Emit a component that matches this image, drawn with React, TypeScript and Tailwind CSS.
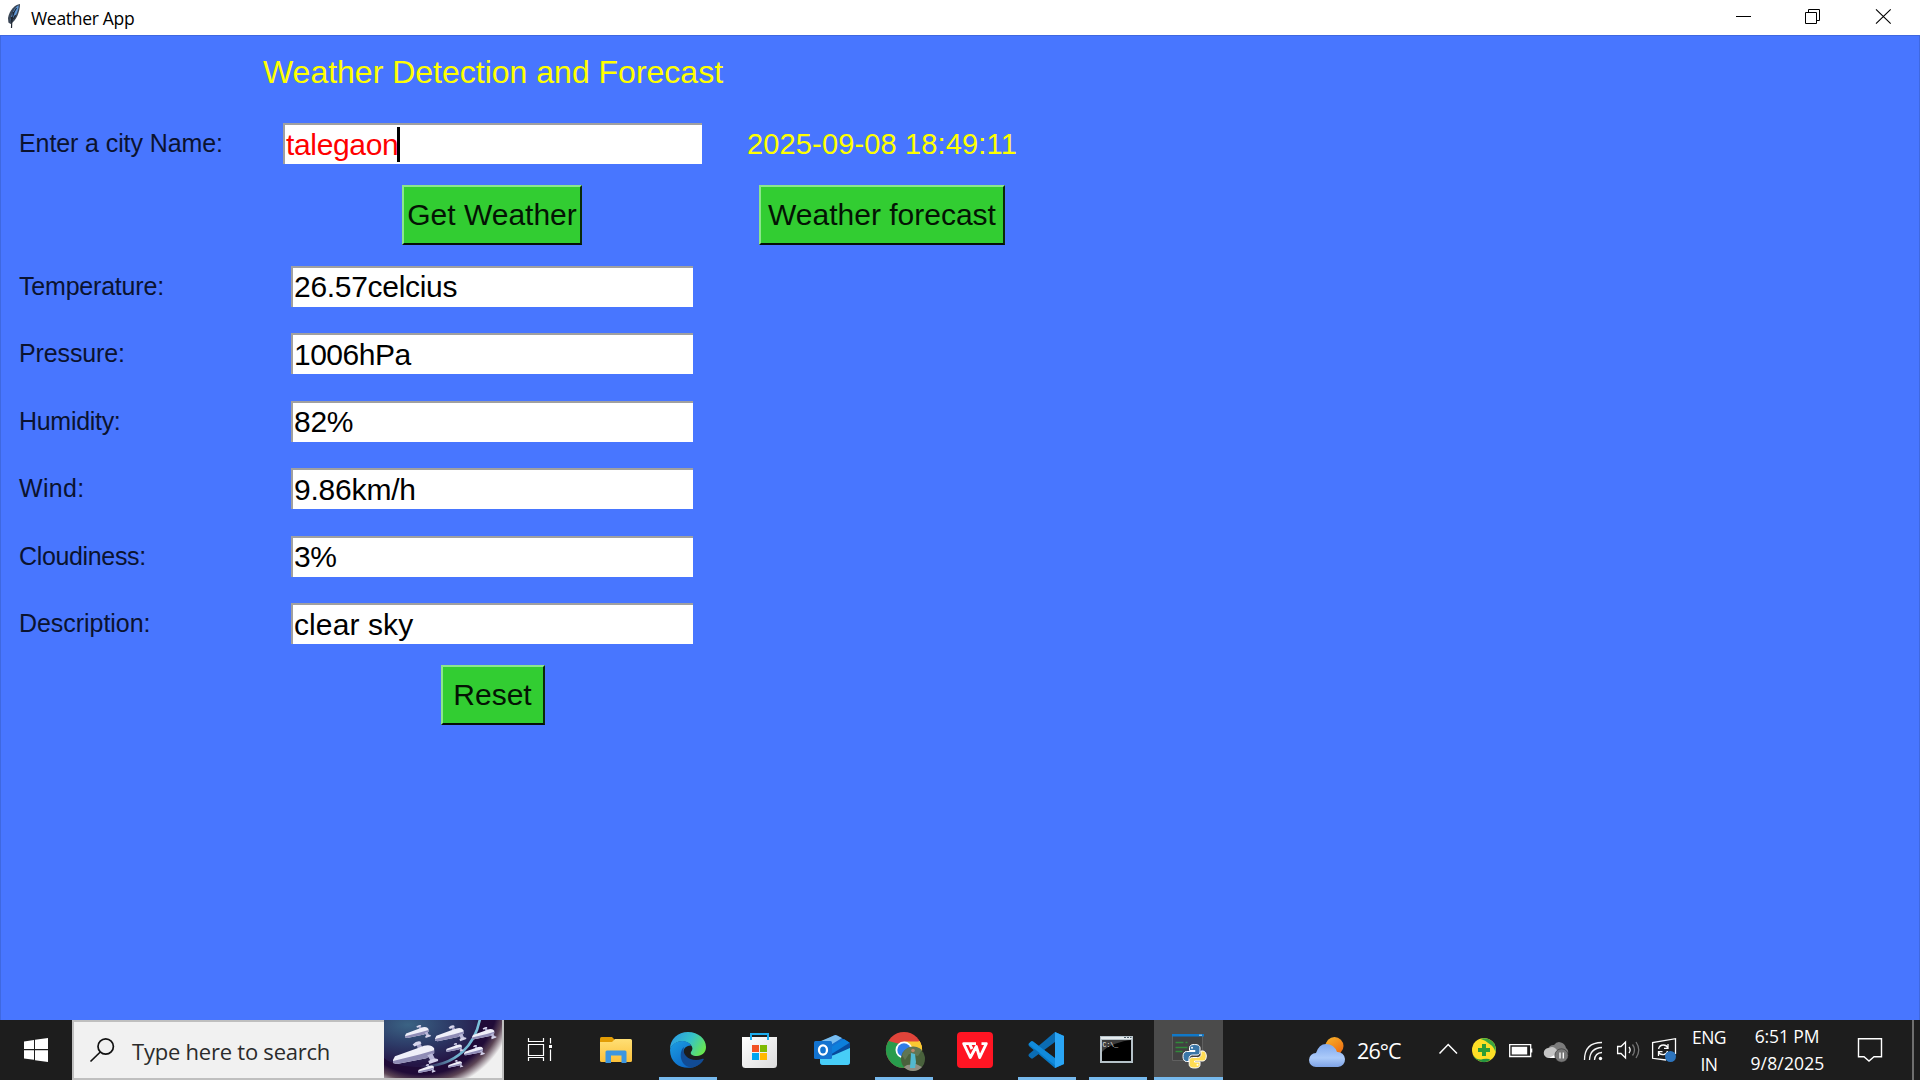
import React from "react";

const readings = [
  { label: "Temperature:", value: "26.57celcius", fit: "tracking-[-0.3px]", labelFit: "tracking-[-0.2px]" },
  { label: "Pressure:", value: "1006hPa", fit: "tracking-[-0.5px]", labelFit: "tracking-[-0.12px]" },
  { label: "Humidity:", value: "82%", fit: "tracking-[-0.3px]", labelFit: "tracking-[-0.3px]" },
  { label: "Wind:", value: "9.86km/h", fit: "tracking-[-0.2px]", labelFit: "tracking-[0.35px]" },
  { label: "Cloudiness:", value: "3%", fit: "tracking-[-0.35px]", labelFit: "tracking-[-0.35px]" },
  { label: "Description:", value: "clear sky", fit: "tracking-[0.1px]", labelFit: "tracking-[-0.05px]" },
];

function Feather() {
  return (
    <svg className="h-[26px] w-[16px]" viewBox="0 0 16 26">
      <path d="M14 1C9 1.500 3.500 7 2 15L2.400 19.500 4.500 21C10 18 14 9 14 1Z" fill="#3a4656" />
      <path d="M12.800 2.300C9 4 5.500 10 4.500 17.500 9 15 12.300 9 12.800 2.300Z" fill="#5f97d6" />
      <path d="M10.500 5C7.500 9 5.500 15 5.500 25M7 9v4M5.500 14v4M9.500 12l-2 4" stroke="#1c2430" strokeWidth="1.200" fill="none" />
    </svg>
  );
}

function TitleBar() {
  return (
    <header className="flex h-[35px] w-full items-center bg-white">
      <div className="flex h-full w-[31px] items-center pl-[6px] pb-[3px]">
        <Feather />
      </div>
      <span className="pt-[3px] text-[17.5px] leading-none tracking-[-0.3px] text-black">Weather App</span>
      <div className="ml-auto flex h-full">
        <svg className="h-[35px] w-[70px]" viewBox="0 0 70 35">
          <path d="M27 16.500H42" stroke="#000" />
        </svg>
        <svg className="h-[35px] w-[70px]" viewBox="0 0 70 35" fill="none" stroke="#000">
          <path d="M26.500 12.500h11v11h-11zM29.500 12V9.500H40.500V20.500H38" />
        </svg>
        <svg className="h-[35px] w-[71px]" viewBox="0 0 71 35">
          <path d="M27 9.300L41.700 23.700M41.700 9.300L27 23.700" stroke="#000" strokeWidth="1.100" />
        </svg>
      </div>
    </header>
  );
}

function TkButton({ size, children }: { size: string; children: React.ReactNode }) {
  return (
    <button
      className={
        size +
        " flex h-[60px] items-center justify-center whitespace-nowrap border-2 border-t-[#8ce68c] border-l-[#8ce68c] border-r-[#0a2a0a] border-b-[#061006] bg-[#32cd32] text-[30px] leading-none text-[#041404]"
      }
    >
      {children}
    </button>
  );
}

function WeatherForm() {
  return (
    <main className="h-[985px] w-full border-x border-t border-[#3f68e0] bg-[#4876ff] font-['Liberation_Sans',Arial,sans-serif]">
      <div className="grid w-[1033px] grid-cols-[253px_476px_304px]">
        <div />
        <h1 className="flex h-[72px] items-center justify-center whitespace-nowrap pl-[2px] text-[32px] leading-none text-[#ffff00]">
          Weather Detection and Forecast
        </h1>
        <div />

        <label className="flex h-[72px] items-center whitespace-nowrap pb-[1px] pl-[18px] text-[25px] leading-none tracking-[-0.1px] text-[#0b1330]">
          Enter a city Name:
        </label>
        <div className="flex h-[72px] items-center justify-center pb-[1px] pl-[1px]">
          <div className="flex h-[41px] w-[419px] items-center border-t-2 border-l-2 border-t-[#a0a0a0] border-l-[#a0a0a0] bg-white pl-[1px] pt-[1px]">
            <span className="text-[30px] leading-none tracking-[-0.35px] text-[#ff0000]">talegaon</span>
            <span className="-ml-[1px] mb-[1px] h-[35px] w-[3px] bg-black" />
          </div>
        </div>
        <div className="flex h-[72px] items-center justify-center text-[29px] leading-none tracking-[0.15px] text-[#ffff00]">
          2025-09-08 18:49:11
        </div>

        <div />
        <div className="flex h-[70px] items-center justify-center">
          <TkButton size="w-[180px]">Get Weather</TkButton>
        </div>
        <div className="flex h-[70px] items-center justify-center">
          <TkButton size="w-[246px]">Weather forecast</TkButton>
        </div>
      </div>

      <div className="pt-[2.5px]">
        {readings.map((r) => (
          <div key={r.label} className="grid h-[67.5px] w-[732px] grid-cols-[290px_402px] items-center">
            <label className={r.labelFit + " pl-[18px] text-[25px] leading-none text-[#0b1330]"}>{r.label}</label>
            <div
              className={
                r.fit +
                " flex h-[41px] items-center border-t-2 border-l-2 border-t-[#a0a0a0] border-l-[#a0a0a0] bg-white pl-[1px] text-[30px] leading-none text-black"
              }
            >
              {r.value}
            </div>
          </div>
        ))}
      </div>

      <div className="flex h-[75px] w-[730px] items-center justify-center pl-[253px]">
        <TkButton size="w-[104px]">Reset</TkButton>
      </div>
    </main>
  );
}

function Plane({ x, y, s }: { x: number; y: number; s: number }) {
  return (
    <g transform={`translate(${x} ${y}) scale(${s})`}>
      <path d="M24 3l4-1 4 8h-6z" fill="#a3a1c8" />
      <path d="M20 3q4-4 8-3l1 2-7 3z" fill="#d9d8ee" />
      <path d="M0 19L2 15 27 6Q38 1 42 7L42 12 34 17 4 23 0 22Z" fill="#efeff9" />
      <path d="M0 20L28 13 42 9V12L34 17 4 23 0 22Z" fill="#8f8cb6" />
      <path d="M35 14l5-2 4 8-5 1z" fill="#b9b7d8" />
      <path d="M36 20q6-4 10-2v2l-9 3z" fill="#d5d3ea" />
    </g>
  );
}

function SearchArt() {
  return (
    <svg className="h-[58px] w-[118px]" viewBox="0 0 118 58">
      <defs>
        <radialGradient id="sky" cx="0.25" cy="0.1" r="0.85">
          <stop offset="0" stopColor="#3b6384" />
          <stop offset="0.5" stopColor="#2d3c68" />
          <stop offset="1" stopColor="#251546" />
        </radialGradient>
        <radialGradient id="halo" gradientUnits="userSpaceOnUse" cx="38" cy="-22" r="93">
          <stop offset="0.82" stopColor="#200b38" />
          <stop offset="0.9" stopColor="#5c4555" />
          <stop offset="1" stopColor="#f0f0f0" />
        </radialGradient>
        <linearGradient id="rim" x1="1" y1="0" x2="0" y2="1">
          <stop offset="0" stopColor="#7cc3dc" />
          <stop offset="0.6" stopColor="#6fb0cc" />
          <stop offset="1" stopColor="#6fb0cc" stopOpacity="0" />
        </linearGradient>
      </defs>
      <rect width="118" height="58" fill="url(#halo)" />
      <path d="M0 0H96C90 26 74 46 46 47 26 48 8 45 0 38Z" fill="url(#sky)" />
      <path d="M96 -1C91 24 74 46 36 47" stroke="url(#rim)" strokeWidth="2.600" fill="none" />
      <Plane x={21} y={5} s={0.56} />
      <Plane x={51} y={5.5} s={0.68} />
      <Plane x={88} y={7} s={0.53} />
      <Plane x={9} y={21.5} s={0.98} />
      <Plane x={62} y={23} s={0.38} />
      <Plane x={80} y={25} s={0.45} />
      <Plane x={34} y={44} s={0.38} />
      <Plane x={64} y={40} s={0.33} />
    </svg>
  );
}

function TaskCell({ size, open, active, children }: { size: string; open?: boolean; active?: boolean; children: React.ReactNode }) {
  return (
    <div className={size + " relative h-[60px] shrink-0 " + (active ? "bg-[#4b4b4b]" : "")}>
      <svg className="h-[60px] w-[72px]" viewBox="0 0 72 60">
        {children}
      </svg>
      {open && (
        <div className={"absolute bottom-0 h-[3px] bg-[#76b9ed] " + (active ? "left-0 right-0" : "left-[7px] w-[58px]")} />
      )}
    </div>
  );
}

function TrayIcon({ size = "w-[36px]", box = "0 0 36 60", children }: { size?: string; box?: string; children: React.ReactNode }) {
  return (
    <svg className={size + " h-[60px] shrink-0"} viewBox={box} fill="none">
      {children}
    </svg>
  );
}

function Taskbar() {
  return (
    <footer className="flex h-[60px] w-full bg-[#1d1d1d] text-white">
      <svg className="h-[60px] w-[72px] shrink-0" viewBox="0 0 72 60" fill="#fff">
        <path d="M24 21.400L34 20V29H24zM35 19.800L48 18V29H35zM24 30.200H34V39.800L24 38.600zM35 30.200H48V42L35 40.200z" />
      </svg>
      <div className="flex h-[60px] w-[432px] shrink-0 items-center border-2 border-[#bfbfbf] bg-[#f1f1f1]">
        <svg className="h-[56px] w-[58px] shrink-0" viewBox="2 2 58 56" fill="none" stroke="#111" strokeWidth="1.700">
          <circle cx="33.700" cy="26.500" r="7.700" />
          <path d="M28.300 32L18.500 41.500" />
        </svg>
        <span className="w-[252px] whitespace-nowrap pt-[1px] text-[22px] leading-none tracking-[-0.23px] text-[#2b2b2b]">
          Type here to search
        </span>
        <div className="-mt-[2px] h-[58px] w-[118px] shrink-0 overflow-hidden">
          <SearchArt />
        </div>
      </div>
      <svg className="h-[60px] w-[76px] shrink-0" viewBox="0 0 76 60" fill="none" stroke="#fff" strokeWidth="1.200">
        <path d="M24.500 24.500h15v11h-15zM24.500 18v3.500h15V18M24.500 41v-3.500h15V41M46.500 18v5.500M46.500 29.500V41" />
        <rect x="45" y="25" width="3" height="3" fill="#fff" stroke="none" />
      </svg>

      <TaskCell size="w-[72px]">
        <defs>
          <linearGradient id="fold" x1="0" y1="0" x2="0" y2="1">
            <stop stopColor="#ffdf75" />
            <stop offset="1" stopColor="#fcc13a" />
          </linearGradient>
        </defs>
        <path d="M20 18.500q0-1.500 1.500-1.500H32l3 3v4H20z" fill="#e29c05" />
        <path d="M20 22h12l3-3h15.500q1.500 0 1.500 1.500V40.500q0 1.500-1.500 1.500h-29q-1.500 0-1.500-1.500z" fill="url(#fold)" />
        <path d="M25.500 43V32q0-1.500 1.500-1.500h18q1.500 0 1.500 1.500v11h-5v-7.500H31V43z" fill="#3c96e0" />
      </TaskCell>
      <TaskCell size="w-[72px]" open>
        <defs>
          <linearGradient id="edgeTop" x1="0" y1="0.3" x2="1" y2="0.7">
            <stop stopColor="#2a9be4" />
            <stop offset="0.5" stopColor="#36c3c8" />
            <stop offset="1" stopColor="#6be84a" />
          </linearGradient>
          <linearGradient id="edgeMid" x1="0" y1="0" x2="0.8" y2="1">
            <stop stopColor="#1b9de2" />
            <stop offset="1" stopColor="#0b62c4" />
          </linearGradient>
        </defs>
        <path d="M18 29C18 19 26 12 36 12 46.500 12 54 19 54 27 54 32.500 50 36 45 36 40 36 38 34 39 32 41 29.500 41 27 38.500 24.500 32 18.500 22 21 18 29Z" fill="url(#edgeTop)" />
        <path d="M18 30C19 22 33 17 39.500 25.500 34 25 31 29 31.500 33 32 42 41 46 46 45 36 51.500 18 47 18 30Z" fill="url(#edgeMid)" />
        <path d="M32 27C26 32 28 48 41 47.500 46.500 46 50 43 51.700 39.500 52 38.500 51 38.500 50 39 39 43 29 35 32 27Z" fill="#114b94" />
      </TaskCell>
      <TaskCell size="w-[72px]">
        <defs>
          <linearGradient id="bag" x1="0" y1="0" x2="1" y2="1">
            <stop stopColor="#fff" />
            <stop offset="1" stopColor="#dcdcdc" />
          </linearGradient>
        </defs>
        <path d="M18 17H53V44.500q0 3.500-3.500 3.500h-28q-3.500 0-3.500-3.500z" fill="url(#bag)" />
        <path d="M27 20v-6h17v6" fill="none" stroke="#1dadee" strokeWidth="2" />
        <path d="M28 25h7v7h-7z" fill="#f25022" />
        <path d="M36 25h7v7h-7z" fill="#7fba00" />
        <path d="M28 33h7v7h-7z" fill="#00a4ef" />
        <path d="M36 33h7v7h-7z" fill="#ffb900" />
      </TaskCell>
      <TaskCell size="w-[72px]">
        <path d="M25 22L38 15.500q1.500-.8 3 0L52.500 22q1.500 1 1.500 2.500V42q0 3-3 3H27q-3 0-3-3z" fill="#1671cf" />
        <path d="M25 21L38 15.500q1.500-.8 3 0L46 18 28 29z" fill="#78bdf0" />
        <path d="M29 31L48 19l6 4-20 14z" fill="#0c7fdc" />
        <path d="M34 35L54 22.500V28L36 39z" fill="#074a9c" />
        <path d="M24 39L38 35l16-7V42q0 3-3 3H27q-3 0-3-3z" fill="#47cdf7" />
        <rect x="18" y="21" width="18" height="18" rx="1.500" fill="#1373d0" />
        <ellipse cx="27" cy="30" rx="4" ry="4.700" fill="none" stroke="#fff" strokeWidth="2.300" />
      </TaskCell>
      <TaskCell size="w-[72px]" open>
        <circle cx="36" cy="30" r="18" fill="#e0443a" />
        <path d="M36 30L20.400 21A18 18 0 0 0 36 48L40 38z" fill="#289c4c" />
        <path d="M36 30L51.600 21A18 18 0 0 1 36 48L42 34z" fill="#f9c932" />
        <path d="M36 21.500H51.900A18 18 0 0 1 54 30L44 33z" fill="#f9c932" />
        <path d="M20.400 21L29 34 32 24z" fill="#289c4c" />
        <circle cx="36" cy="30" r="8.500" fill="#fff" />
        <circle cx="36" cy="30" r="6.700" fill="#2f7de8" />
        <circle cx="45" cy="39" r="12" fill="#49613c" />
        <path d="M34 35a12 12 0 0 1 20-5l-4 6-9-2-4 6z" fill="#5f7553" />
        <path d="M36 47a12 12 0 0 0 18 0l-6-3-9 1z" fill="#918f83" />
        <path d="M43 33l4 1 1 8-1 6h-5z" fill="#53b9cf" />
        <circle cx="45" cy="30.500" r="1.800" fill="#b98567" />
      </TaskCell>
      <TaskCell size="w-[71px]">
        <rect x="17" y="12" width="36" height="36" rx="4" fill="#ff1523" />
        <path d="M36 23.600H23.700L30.300 37.500 36.300 26.500 39.700 37.500 46.300 23.600H41.500M29.500 23.800L32 29" fill="none" stroke="#fff" strokeWidth="2.900" strokeLinejoin="round" />
      </TaskCell>
      <TaskCell size="w-[71px]" open>
        <path d="M44 12L53 16V44L44 48 18 26Q16.800 24.800 18 23.500L20 21.600Q21 21 22 21.600L44 38z" fill="#0879c5" />
        <path d="M44 12L18 34Q16.800 35.200 18 36.400L20 38.300Q21 39 22 38.300L44 22z" fill="#0b6cb3" />
        <path d="M17.500 24L20 21.600Q21 21 22 21.600L46 40v7z" fill="#118bdc" />
        <path d="M44 12L53 16V44L44 48Z" fill="#2aa5f5" />
      </TaskCell>
      <TaskCell size="w-[71px]" open>
        <rect x="18" y="16" width="33" height="27" fill="#b6c2c9" />
        <rect x="19" y="17" width="31" height="2" fill="#e5ecef" />
        <path d="M42 17.500h2m1 0h2m1 0h1.500" stroke="#4d5e6a" strokeWidth="1" />
        <rect x="20" y="20" width="29" height="21" fill="#000" />
        <path d="M20 20H49C40 21 26 25 20 32z" fill="#555" opacity=".7" />
        <text x="20.500" y="27" fill="#eee" fontSize="6.500" fontFamily="Liberation Mono">C:\_</text>
      </TaskCell>
      <TaskCell size="ml-[1px] w-[69px]" open active>
        <path d="M18.500 14.500h30v26h-30z" fill="#414141" stroke="#606060" />
        <path d="M18 14h32v2.500H18z" fill="#1078c8" />
        <path d="M45 15.200h3" stroke="#b8dcf5" />
        <path d="M21.500 22.500h8m2 0h2M21.500 27.500h12M21.500 31.500h7" stroke="#318a3b" strokeWidth="1.300" />
        <g transform="translate(29 24.500)" stroke="#fff" strokeWidth="1" strokeLinejoin="round">
          <path d="M11.500 0C7 0 6.500 2 6.500 3.500V6H12v1H3.500C1 7 0 9.500 0 12s1 5 3.500 5H6v-3c0-2 1.500-3.500 3.500-3.500H14c1.800 0 3-1.300 3-3v-4C17 1.500 15.500 0 11.500 0Z" fill="#3a76a8" />
          <path d="M11.500 23.500C16 23.500 17 22 17 20v-2.500H11.500v-1H20c2.500 0 3.300-2.500 3.300-5S22 6.500 20 6.500h-2V10c0 2-1.500 3-3.500 3H9.500c-2 0-3.300 1.300-3.300 3v4c0 2 1.500 3.500 5.300 3.500Z" fill="#ffdc53" />
          <circle cx="9" cy="3.300" r="1" fill="#fff" stroke="none" />
          <circle cx="14.500" cy="20.300" r="1" fill="#fff" stroke="none" />
        </g>
      </TaskCell>

      <div className="ml-auto flex h-[60px]">
        <TrayIcon size="w-[54px]" box="0 0 54 60">
          <defs>
            <linearGradient id="sun" x1="0" y1="0" x2="0.7" y2="1">
              <stop stopColor="#f8b62c" />
              <stop offset="1" stopColor="#ee6c10" />
            </linearGradient>
            <linearGradient id="cloud" x1="0" y1="0" x2="0" y2="1">
              <stop stopColor="#7fa8ee" />
              <stop offset="0.600" stopColor="#accbfa" />
              <stop offset="1" stopColor="#7ea3e6" />
            </linearGradient>
          </defs>
          <circle cx="34.500" cy="26" r="9" fill="url(#sun)" />
          <path d="M16 47A7 7 0 0 1 16 33Q19 24 26 24q8 0 11 8a7.500 7.500 0 0 1 1 15z" fill="url(#cloud)" />
        </TrayIcon>
        <span className="flex w-[76px] items-center pl-[3px] pt-[2px] text-[21.500px] leading-none tracking-[-0.9px]">26°C</span>
        <TrayIcon>
          <path d="M9.500 33.500L18.200 24.500 27 33.500" stroke="#fff" strokeWidth="1.500" />
        </TrayIcon>
        <TrayIcon>
          <circle cx="18" cy="30" r="12" fill="#fddf26" />
          <path d="M14 18.700Q24 17 28.500 24q2 4 1 8-2-6-6-8-4-4-9.500-5.300z" fill="#3aa640" />
          <path d="M7 35q4 6 10 4 6-1 7.500 1-6 4-12 .5Q8 39 7 35z" fill="#249440" />
          <path d="M12 30H24M18 24V36" stroke="#2d9d36" strokeWidth="4" />
        </TrayIcon>
        <TrayIcon>
          <path d="M7.700 24.700h21v11.800h-21z" stroke="#fff" strokeWidth="1.300" />
          <path d="M9.700 26.700h15.500v7.800H9.700zM29 28.500h1.300v4H29z" fill="#fff" />
        </TrayIcon>
        <TrayIcon>
          <path d="M11 38a5 5 0 0 1-1-9.500q2-4 6-3.500 3-4 7-2.500 4 1 5 5.500 3 2 2 6v4z" fill="#7b7b7b" />
          <path d="M10.500 38a5 5 0 0 1 .5-10q3-2 6 0l5 5v5z" fill="#c4c4c4" />
          <path d="M11 38l9-5v5z" fill="#fff" />
          <circle cx="23.500" cy="35.500" r="6.700" fill="#777" stroke="#1d1d1d" strokeWidth=".5" />
          <path d="M22 32.500v6M25.300 32.500v6" stroke="#fff" strokeWidth="1.300" />
        </TrayIcon>
        <TrayIcon>
          <path d="M10.500 40Q10.500 22.500 28 22.500M15.500 40Q16 28 28 27.500M20.500 40Q21 33 28 32.500" stroke="#f5f5f5" strokeWidth="1.300" />
          <circle cx="26.500" cy="38.500" r="1.700" fill="#fff" />
        </TrayIcon>
        <TrayIcon>
          <path d="M7.600 26.500H11L15.500 22V38L11 33.500H7.600z" stroke="#fff" strokeWidth="1.300" />
          <path d="M19 27q2.300 3 0 6" stroke="#fff" strokeWidth="1.300" />
          <path d="M22.500 24.500q4 5.500 0 11M26 22q5.500 8 0 16" stroke="#777" strokeWidth="1.300" />
        </TrayIcon>
        <TrayIcon>
          <path d="M20 40L6.600 38.300V22.500L29.500 18.700V34" stroke="#fff" strokeWidth="1.300" />
          <path d="M12.500 29q1-4 5-4 3 0 4.500 3m0-4v4.300h-4M21.500 31q-1 4-5 3.500-3 0-4-2.500m0 4v-4.300h4" stroke="#fff" strokeWidth="1.300" />
          <circle cx="24.500" cy="36.500" r="5.500" fill="#2d74bd" />
        </TrayIcon>
        <div className="flex w-[54px] flex-col items-center pt-[4px] text-[17.500px] leading-[27px] tracking-[-0.5px]">
          <span>ENG</span>
          <span>IN</span>
        </div>
        <div className="flex w-[102px] flex-col items-center pt-[3px] text-[17.500px] leading-[27px]">
          <span className="tracking-[-0.1px]">6:51 PM</span>
          <span className="pl-[1px] tracking-[0.15px]">9/8/2025</span>
        </div>
        <TrayIcon size="w-[74px]" box="0 0 74 60">
          <path d="M20.500 18.700H43.500V36.700H36L31 41 26 36.700H20.500z" stroke="#fff" strokeWidth="1.400" />
        </TrayIcon>
        <div className="h-full w-[8px] border-l-2 border-[#6e6e6e]" />
      </div>
    </footer>
  );
}

export default function App() {
  return (
    <div className="flex h-[1080px] w-[1920px] flex-col overflow-hidden font-['Open_Sans','Noto_Sans',sans-serif]">
      <TitleBar />
      <WeatherForm />
      <Taskbar />
    </div>
  );
}
